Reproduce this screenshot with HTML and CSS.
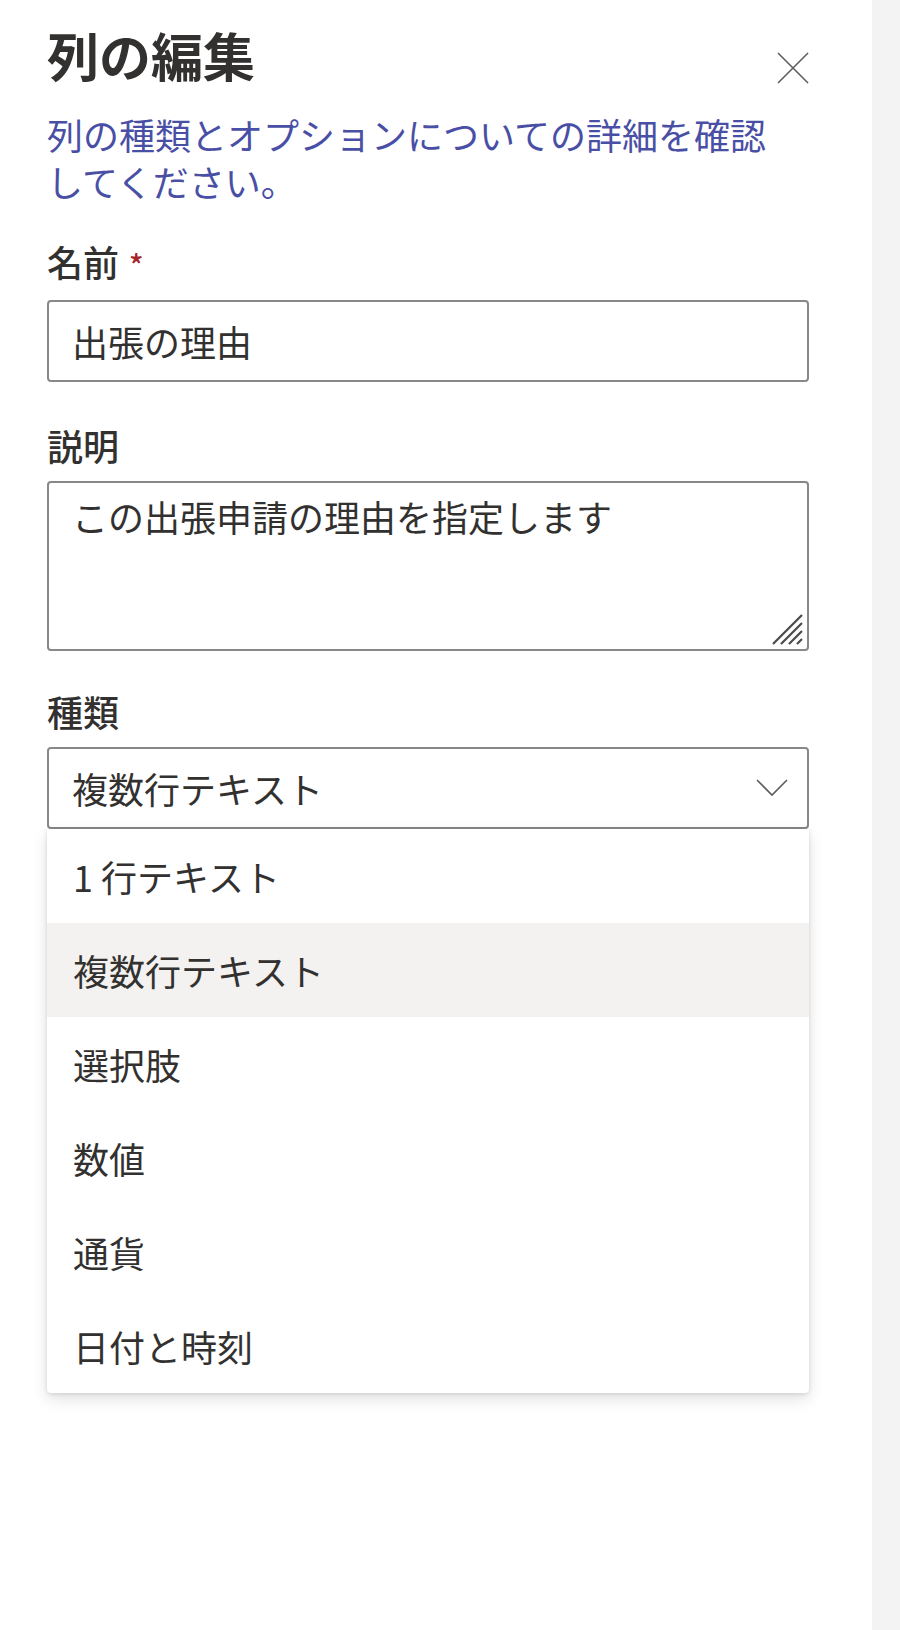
FILE: index.html
```html
<!DOCTYPE html>
<html lang="ja">
<head>
<meta charset="utf-8">
<title>列の編集</title>
<link rel="stylesheet" href="styles.css">
</head>
<body>
  <div class="pagina">
    <div class="panel">
      <div class="cabecera">
        <h1 class="titulo">列の編集</h1>
        <button class="cerrar" aria-label="閉じる">
          <svg width="32" height="32" viewBox="0 0 32 32">
            <path d="M1 1 L31 31 M31 1 L1 31" stroke="#605e5c" stroke-width="1.6" fill="none"/>
          </svg>
        </button>
      </div>
      <p class="ayuda">列の種類とオプションについての詳細を確認してください。</p>

      <div class="campo primero">
        <label class="etiqueta">名前<span class="requerido">*</span></label>
        <div class="caja">出張の理由</div>
      </div>

      <div class="campo">
        <label class="etiqueta">説明</label>
        <div class="caja area">
          この出張申請の理由を指定します
          <svg class="agarre" width="34" height="34" viewBox="0 0 34 34">
            <path d="M3 32 L32 3 M11 32 L32 11 M19 32 L32 19 M27 32 L32 27" stroke="#4a4a4a" stroke-width="2.2" fill="none"/>
          </svg>
        </div>
      </div>

      <div class="campo tipo">
        <label class="etiqueta">種類</label>
        <div class="caja selector">
          <span>複数行テキスト</span>
          <svg width="32" height="18" viewBox="0 0 32 18">
            <path d="M1 1 L16 16 L31 1" stroke="#605e5c" stroke-width="1.6" fill="none"/>
          </svg>
        </div>
        <ul class="lista">
          <li>1 行テキスト</li>
          <li class="activa">複数行テキスト</li>
          <li>選択肢</li>
          <li>数値</li>
          <li>通貨</li>
          <li>日付と時刻</li>
        </ul>
      </div>
    </div>
    <div class="franja"></div>
  </div>
</body>
</html>
```

FILE: styles.css
```css
body {
  margin: 0;
  background-color: #ffffff;
  font-family: "Noto Sans CJK JP", "Noto Sans", sans-serif;
  color: #323130;
}

.pagina {
  display: flex;
  min-height: 1630px;
}

.panel {
  flex: 1;
  padding: 23px 63px 0 47px;
}

.franja {
  width: 28px;
  background-color: #f3f3f3;
}

.cabecera {
  display: flex;
  justify-content: space-between;
  align-items: flex-start;
}

.titulo {
  margin: 0;
  font-size: 52px;
  line-height: 64px;
  font-weight: 700;
  color: #323130;
}

.cerrar {
  margin-top: 29px;
  padding: 0;
  border: none;
  background: none;
  width: 32px;
  height: 32px;
}

.ayuda {
  margin: 24px 0 0;
  max-width: 740px;
  font-size: 36px;
  line-height: 47px;
  color: #4a4fa6;
}

.campo {
  margin-top: 40px;
}

.campo.primero {
  margin-top: 33px;
}

.campo.tipo {
  margin-top: 37px;
}

.etiqueta {
  display: block;
  font-size: 36px;
  line-height: 47px;
  font-weight: 500;
  margin-bottom: 12px;
}

.requerido {
  color: #a4262c;
  margin-left: 10px;
  font-size: 30px;
}

.caja {
  box-sizing: border-box;
  height: 82px;
  border: 2px solid #8a8886;
  border-radius: 4px;
  padding: 0 23px;
  font-size: 36px;
  line-height: 78px;
  color: #323130;
}

.caja.area {
  position: relative;
  height: 170px;
  padding-top: 10px;
  line-height: 47px;
}

.agarre {
  position: absolute;
  right: 3px;
  bottom: 3px;
}

.caja.selector {
  display: flex;
  justify-content: space-between;
  align-items: center;
  padding-right: 19px;
  line-height: 47px;
}

.lista {
  list-style: none;
  margin: 0;
  padding: 0;
  background-color: #ffffff;
  border-radius: 0 0 4px 4px;
  box-shadow: 0 6px 16px rgba(0, 0, 0, 0.12), 0 1px 4px rgba(0, 0, 0, 0.12);
}

.lista li {
  height: 94px;
  display: flex;
  align-items: center;
  padding-left: 26px;
  font-size: 36px;
}

.lista li.activa {
  background-color: #f3f2f1;
}
```
